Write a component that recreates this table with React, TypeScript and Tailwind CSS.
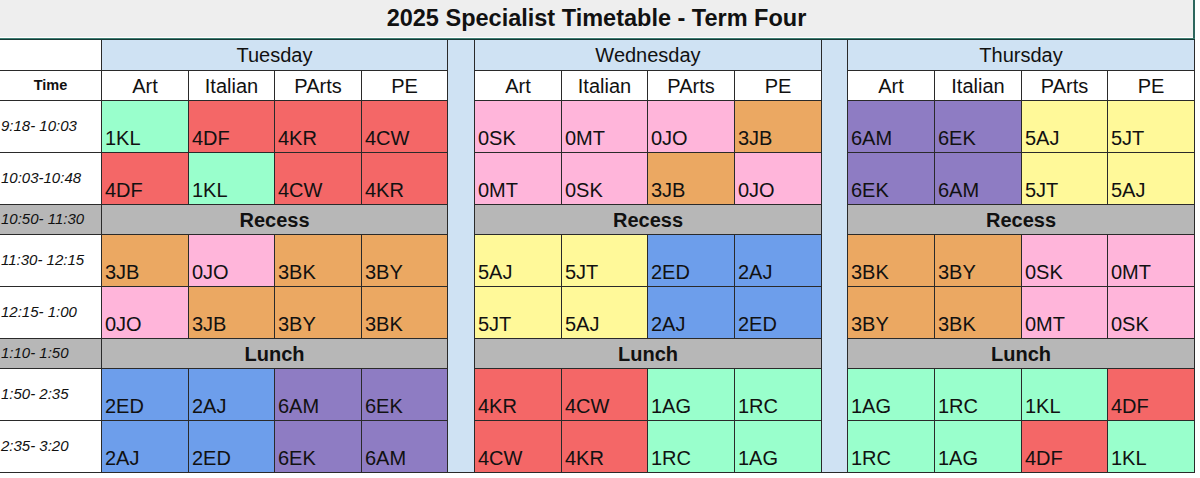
import React from "react";

type Slot = { time: string } & ({ kind: "break"; label: string } | { kind: "classes"; days: string[][] });

const colour: Record<string, string> = {
    "0": "bg-[#ffb5da]",
    "1": "bg-[#99ffcc]",
    "2": "bg-[#6d9eeb]",
    "3": "bg-[#eba862]",
    "4": "bg-[#f46767]",
    "5": "bg-[#fff999]",
    "6": "bg-[#8e7cc3]",
};

const days = ["Tuesday", "Wednesday", "Thursday"];
const subjects = ["Art", "Italian", "PArts", "PE"];

const slots: Slot[] = [
    {time: "9:18- 10:03", kind: "classes", days: [["1KL", "4DF", "4KR", "4CW"], ["0SK", "0MT", "0JO", "3JB"], ["6AM", "6EK", "5AJ", "5JT"]]},
    {time: "10:03-10:48", kind: "classes", days: [["4DF", "1KL", "4CW", "4KR"], ["0MT", "0SK", "3JB", "0JO"], ["6EK", "6AM", "5JT", "5AJ"]]},
    {time: "10:50- 11:30", kind: "break", label: "Recess"},
    {time: "11:30- 12:15", kind: "classes", days: [["3JB", "0JO", "3BK", "3BY"], ["5AJ", "5JT", "2ED", "2AJ"], ["3BK", "3BY", "0SK", "0MT"]]},
    {time: "12:15- 1:00", kind: "classes", days: [["0JO", "3JB", "3BY", "3BK"], ["5JT", "5AJ", "2AJ", "2ED"], ["3BY", "3BK", "0MT", "0SK"]]},
    {time: "1:10- 1:50", kind: "break", label: "Lunch"},
    {time: "1:50- 2:35", kind: "classes", days: [["2ED", "2AJ", "6AM", "6EK"], ["4KR", "4CW", "1AG", "1RC"], ["1AG", "1RC", "1KL", "4DF"]]},
    {time: "2:35- 3:20", kind: "classes", days: [["2AJ", "2ED", "6EK", "6AM"], ["4CW", "4KR", "1RC", "1AG"], ["1RC", "1AG", "4DF", "1KL"]]},
];

const App: React.FC = () => {
    return (
        <div className="min-h-screen bg-white text-[#111] font-['Liberation_Sans',Arial,sans-serif]">
            <div className="w-[1195px] h-[37px] bg-[#eeeeee] border-r-2 border-[#2d665d] flex items-center justify-center">
                <h1 className="text-[23.5px] font-bold leading-none">2025 Specialist Timetable - Term Four</h1>
            </div>
            <div className="w-[1195px] h-px bg-white border-r-2 border-[#2d665d]"/>
            <div className="w-[1195px] h-px bg-[#3f7c72]"/>
            <div className="w-[1195px] h-px bg-[#163a34]"/>

            <div className="w-[1195px] grid gap-px bg-[#2a2a2a] border-r border-b border-[#2a2a2a]
                grid-cols-[101px_86px_85px_86px_85px_26px_86px_85px_86px_86px_25px_86px_86px_85px_86px]
                grid-rows-[30px_29px_51px_51px_29px_51px_51px_29px_51px_51px]">

                <div className="col-start-6 row-start-1 row-span-10 bg-[#cfe2f3]"/>
                <div className="col-start-11 row-start-1 row-span-10 bg-[#cfe2f3]"/>

                <div className="bg-white"/>
                {days.map(day =>
                    <div key={day} className="col-span-4 bg-[#cfe2f3] flex items-center justify-center text-[20px]">
                        {day}
                    </div>
                )}

                <div className="bg-white flex items-center justify-center text-[14.5px] font-bold">Time</div>
                {days.map(day =>
                    subjects.map(subject =>
                        <div key={day + subject} className="bg-white flex items-center justify-center text-[20px]">
                            {subject}
                        </div>
                    )
                )}

                {slots.map(slot =>
                    <React.Fragment key={slot.time}>
                        <div className={`${slot.kind === "break" ? "bg-[#b7b7b7]" : "bg-white"} flex items-center pl-px text-[15px] italic whitespace-nowrap`}>
                            {slot.time}
                        </div>
                        {slot.kind === "break"
                            ? days.map(day =>
                                <div key={day} className="col-span-4 bg-[#b7b7b7] flex items-center justify-center text-[20px] font-bold">
                                    {slot.label}
                                </div>
                            )
                            : slot.days.map((codes, d) =>
                                codes.map((code, i) =>
                                    <div key={d + "-" + i} className={`${colour[code[0]]} flex items-end pl-[3px] pb-[2px] text-[20px] leading-[23px]`}>
                                        {code}
                                    </div>
                                )
                            )}
                    </React.Fragment>
                )}
            </div>
        </div>
    );
};

export default App;
